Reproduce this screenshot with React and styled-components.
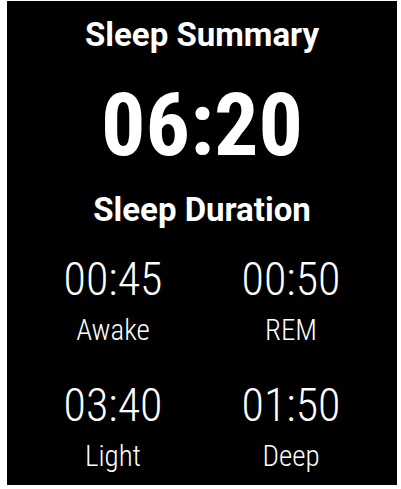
import React from "react";
import styled, { createGlobalStyle } from "styled-components";

const GlobalStyle = createGlobalStyle`
  html, body {
    margin: 0;
    padding: 0;
    background: #fff;
  }
  body {
    font-family: Roboto, "Liberation Sans", sans-serif;
  }
`;

const Screen = styled.div`
  box-sizing: border-box;
  width: 390px;
  height: 484px;
  margin: 1px 0 0 7px;
  padding-top: 14px;
  background: #000;
  color: #fff;
  display: flex;
  flex-direction: column;
  align-items: center;
  overflow: hidden;
`;

const Title = styled.h1`
  margin: 0;
  font-size: 33px;
  line-height: 40px;
  font-weight: 700;
`;

const Total = styled.div`
  margin-top: 26px;
  font-size: 88px;
  line-height: 88px;
  font-weight: 700;
  font-stretch: condensed;
`;

const SubTitle = styled(Title).attrs({ as: "h2" })`
  margin-top: 21px;
`;

const Stages = styled.div`
  margin-top: 24px;
  display: grid;
  grid-template-columns: 178px 178px;
  row-gap: 34px;
`;

const Stage = styled.div`
  display: flex;
  flex-direction: column;
  align-items: center;
  font-weight: 300;
  font-stretch: condensed;
`;

const Time = styled.span`
  font-size: 46px;
  line-height: 50px;
`;

const Label = styled.span`
  margin-top: 10px;
  font-size: 29px;
  line-height: 32px;
`;

const stages = [
  { time: "00:45", label: "Awake" },
  { time: "00:50", label: "REM" },
  { time: "03:40", label: "Light" },
  { time: "01:50", label: "Deep" },
];

export default function App() {
  return (
    <>
      <GlobalStyle />
      <Screen>
        <Title>Sleep Summary</Title>
        <Total>06:20</Total>
        <SubTitle>Sleep Duration</SubTitle>
        <Stages>
          {stages.map((s) => (
            <Stage key={s.label}>
              <Time>{s.time}</Time>
              <Label>{s.label}</Label>
            </Stage>
          ))}
        </Stages>
      </Screen>
    </>
  );
}
